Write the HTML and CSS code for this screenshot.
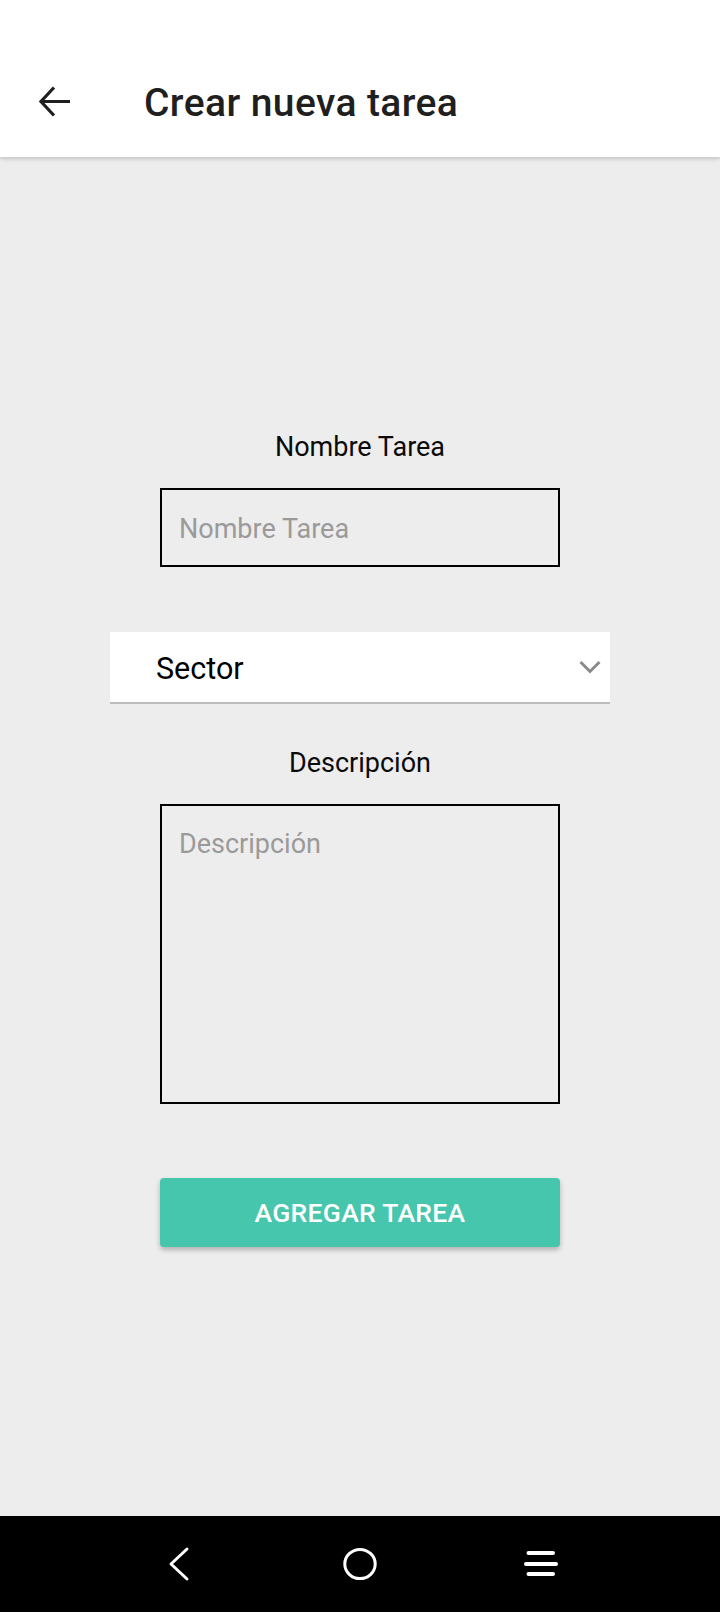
FILE: index.html
```html
<!DOCTYPE html>
<html lang="es">
<head>
<meta charset="utf-8">
<title>Crear nueva tarea</title>
<link rel="stylesheet" href="styles.css">
</head>
<body>
<div class="screen">
  <header class="appbar">
    <svg class="back" width="34" height="34" viewBox="0 0 34 34" aria-hidden="true">
      <path d="M32 17.5H4.5 M16 3.5 L3 17.5 L16 31.5" fill="none" stroke="#1f1f1f" stroke-width="3.2" stroke-linejoin="miter"/>
    </svg>
    <h1 class="title">Crear nueva tarea</h1>
  </header>
  <main class="form">
    <label class="label">Nombre Tarea</label>
    <div class="field field-input"><span class="placeholder">Nombre Tarea</span></div>
    <div class="spinner">
      <span class="spinner-text">Sector</span>
      <svg class="chev" width="22" height="14" viewBox="0 0 22 14" aria-hidden="true">
        <path d="M1.5 2 L11 11.5 L20.5 2" fill="none" stroke="#8a8a8a" stroke-width="3"/>
      </svg>
    </div>
    <label class="label label-desc">Descripción</label>
    <div class="field field-area"><span class="placeholder">Descripción</span></div>
    <button class="btn">AGREGAR TAREA</button>
  </main>
  <nav class="navbar">
    <svg class="nav-back" width="24" height="36" viewBox="0 0 24 36" aria-hidden="true">
      <path d="M19 3 L3 18 L19 33" fill="none" stroke="#fff" stroke-width="3" stroke-linecap="round" stroke-linejoin="round"/>
    </svg>
    <svg class="nav-home" width="36" height="36" viewBox="0 0 36 36" aria-hidden="true">
      <ellipse cx="18" cy="18" rx="15.2" ry="14.6" fill="none" stroke="#fff" stroke-width="3"/>
    </svg>
    <svg class="nav-menu" width="36" height="36" viewBox="0 0 36 36" aria-hidden="true">
      <path d="M6.5 7H31 M4 18H34 M6.5 28H31" fill="none" stroke="#fff" stroke-width="4" stroke-linecap="round"/>
    </svg>
  </nav>
</div>
</body>
</html>
```

FILE: styles.css
```css
html, body {
  margin: 0;
  padding: 0;
}
body {
  background: #ededed;
  font-family: Roboto, "Noto Sans", "Liberation Sans", sans-serif;
}
.screen {
  width: 720px;
  height: 1612px;
  display: flex;
  flex-direction: column;
}
.appbar {
  height: 157px;
  flex: none;
  background: #fff;
  box-shadow: 0 2px 4px rgba(0,0,0,0.18);
  display: flex;
  align-items: flex-end;
  padding: 0 0 0 38px;
  box-sizing: border-box;
  position: relative;
  z-index: 1;
}
.back {
  display: block;
  margin-bottom: 39px;
}
.title {
  margin: 0 0 32px 72px;
  font-size: 39px;
  font-weight: 500;
  line-height: 44px;
  color: #1f1f1f;
  letter-spacing: 0.4px;
}
.form {
  flex: 1;
  display: flex;
  flex-direction: column;
  align-items: center;
  padding-top: 275px;
}
.label {
  font-size: 27px;
  line-height: 30px;
  color: #0a0a0a;
}
.field {
  width: 400px;
  box-sizing: border-box;
  border: 2px solid #000;
  padding: 0 0 0 17px;
}
.field-input {
  height: 79px;
  margin-top: 26px;
  padding-top: 3px;
  display: flex;
  align-items: center;
}
.placeholder {
  font-size: 27px;
  line-height: 30px;
  color: #9a9a9a;
}
.spinner {
  width: 500px;
  height: 72px;
  margin-top: 65px;
  box-sizing: border-box;
  background: #fff;
  border-bottom: 2px solid #bdbdbd;
  display: flex;
  align-items: center;
  justify-content: space-between;
  padding: 4px 9px 0 46px;
}
.spinner-text {
  font-size: 30.5px;
  line-height: 36px;
  color: #000;
}
.chev {
  display: block;
  margin-top: -4px;
}
.label-desc {
  margin-top: 44px;
}
.field-area {
  height: 300px;
  margin-top: 26px;
  padding-top: 23px;
}
.btn {
  margin-top: 74px;
  width: 400px;
  height: 69px;
  border: none;
  border-radius: 4px;
  background: #46c6ac;
  color: #fff;
  font-family: Roboto, "Noto Sans", sans-serif;
  font-size: 26.5px;
  font-weight: 500;
  letter-spacing: 0.3px;
  box-shadow: 0 3px 5px rgba(0,0,0,0.25);
}
.navbar {
  height: 96px;
  flex: none;
  background: #000;
  display: flex;
  align-items: center;
  padding-left: 168px;
}
.navbar svg {
  display: block;
}
.nav-home { margin-left: 150px; }
.nav-menu { margin-left: 144px; }
```
